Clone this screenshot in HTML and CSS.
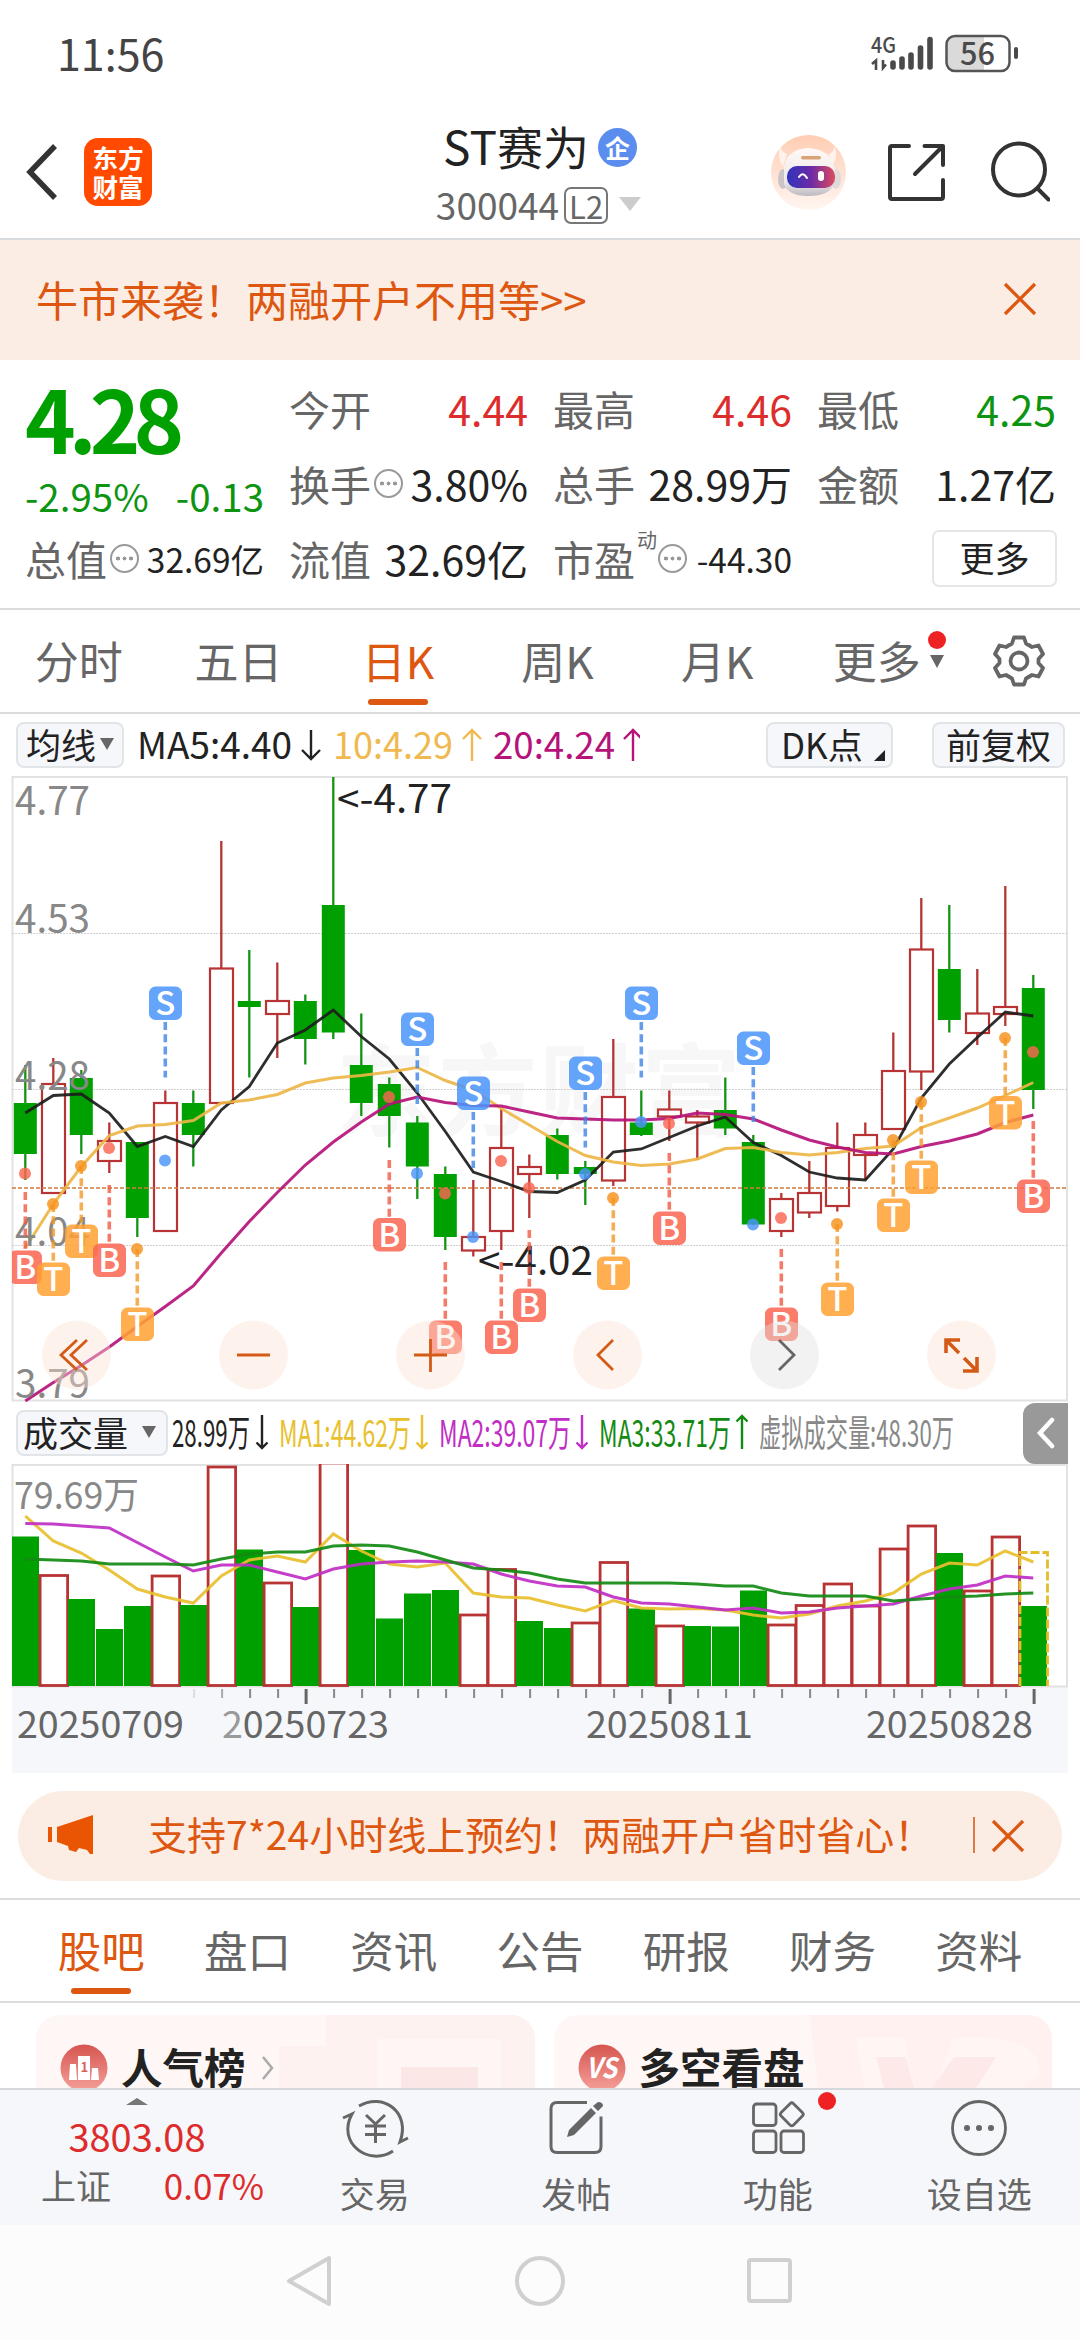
FILE: index.html
```html
<!DOCTYPE html>
<html lang="zh">

<head>
    <meta charset="UTF-8">
    <title>ST赛为 300044</title>
    <link rel="stylesheet" href="styles.css">
</head>

<body>
    <div class="container">
        <div class="status-bar">
            <span class="status-time">11:56</span>
            <svg class="status-icons" width="150" height="44" viewBox="868 32 150 44">
                <text x="871" y="53" font-size="22" font-weight="500" textLength="25" lengthAdjust="spacingAndGlyphs" fill="#4a4a4a">4G</text>
                <path d="M872 64l4-3.500v9.500M883 60v8l3-3.500" fill="none" stroke="#4a4a4a" stroke-width="2.600"/>
                <g stroke="#4a4a4a" stroke-width="5.600" stroke-linecap="round">
                    <path d="M893 63v4M902 59v8M911 55v12M920.500 48v19M930 39.500v27.500"/>
                </g>
                <path d="M953 36h31v35h-31q-6 0-6-6V42q0-6 6-6z" fill="#dadada"/>
                <rect x="946.500" y="36" width="63" height="35" rx="8.500" fill="none" stroke="#555" stroke-width="2.500"/>
                <path d="M1016 49v8" stroke="#4a4a4a" stroke-width="4" stroke-linecap="round"/>
                <text x="960" y="65" font-size="31" font-weight="500" textLength="35" lengthAdjust="spacingAndGlyphs" fill="#4a4a4a">56</text>
            </svg>
        </div>

        <div class="header">
            <div class="header-left">
                <svg width="36" height="60" viewBox="0 0 36 60"><path d="M31 4L6 30l25 26" fill="none" stroke="#333" stroke-width="5.500"/></svg>
                <div class="logo">东方<br>财富</div>
            </div>
            <div class="header-title">
                <div class="stock-name">ST赛为<span class="tag-qi">企</span></div>
                <div class="stock-code">300044<span class="tag-l2">L2</span><i class="tri"></i></div>
            </div>
            <div class="header-right">
                <svg width="280" height="78" viewBox="770 134 280 78">
                    <defs>
                        <linearGradient id="skin" x1="0" y1="0" x2="0" y2="1"><stop offset="0" stop-color="#ffcdb3"/><stop offset="1" stop-color="#fff6f1"/></linearGradient>
                        <linearGradient id="visor"><stop offset="0" stop-color="#2f35bd"/><stop offset=".5" stop-color="#6c2aa6"/><stop offset="1" stop-color="#dd4a5e"/></linearGradient>
                        <linearGradient id="shell" x1="0" y1="0" x2="0" y2="1"><stop offset="0" stop-color="#fffaf7"/><stop offset=".7" stop-color="#eee9e9"/><stop offset="1" stop-color="#bcbac0"/></linearGradient>
                    </defs>
                    <circle cx="808.500" cy="172.500" r="37.500" fill="url(#skin)"/>
                    <path d="M779 151q0-3 2-4 0 5 6 7l-4 12q-5-6-4-15zM836 151q0-3-2-4 0 5-5 7l3 12q5-6 4-15z" fill="#fff2ec"/>
                    <ellipse cx="783" cy="179" rx="5" ry="10" fill="#c9c5c8"/><ellipse cx="836" cy="179" rx="5" ry="10" fill="#ded9da"/>
                    <path d="M784 172q-1-22 24-24 26 2 27 24l-1 12q-4 12-26 12-20 0-24-12z" fill="url(#shell)"/>
                    <rect x="801" y="156" width="20" height="3.500" rx="1.700" fill="#d9a375"/>
                    <rect x="787" y="166" width="48" height="22" rx="10" fill="url(#visor)"/>
                    <path d="M799 177q4-6 8 1" fill="none" stroke="#fff" stroke-width="2" stroke-linecap="round"/>
                    <rect x="818" y="171" width="6" height="10" rx="3" fill="#fff"/>
                    <g fill="none" stroke="#333" stroke-width="4" stroke-linecap="round" stroke-linejoin="round">
                        <path d="M909 146h-17q-2 0-2 2v49q0 2 2 2h49q2 0 2-2v-17M924.500 146H943v19M942 147l-27 27"/>
                        <circle cx="1019" cy="169.500" r="26"/>
                        <path d="M1038 189l10.500 10.500"/>
                    </g>
                </svg>
            </div>
        </div>

        <div class="banner">
            <span>牛市来袭！两融开户不用等&gt;&gt;</span>
            <svg width="34" height="34" viewBox="0 0 34 34"><path d="M2 2l30 30M32 2L2 32" stroke="#dd5711" stroke-width="3.300"/></svg>
        </div>

        <div class="quote">
            <div class="quote-col quote-price">
                <div class="price">4.28</div>
                <div class="change"><span>-2.95%</span><span>-0.13</span></div>
                <div class="quote-item"><span>总值</span><i class="more-dot"></i><b class="small">32.69亿</b></div>
            </div>
            <div class="quote-col">
                <div class="quote-item"><span>今开</span><b class="up">4.44</b></div>
                <div class="quote-item"><span>换手</span><i class="more-dot"></i><b>3.80%</b></div>
                <div class="quote-item"><span>流值</span><b>32.69亿</b></div>
            </div>
            <div class="quote-col">
                <div class="quote-item"><span>最高</span><b class="up">4.46</b></div>
                <div class="quote-item"><span>总手</span><b>28.99万</b></div>
                <div class="quote-item"><span>市盈</span><sup>动</sup><i class="more-dot"></i><b class="small">-44.30</b></div>
            </div>
            <div class="quote-col">
                <div class="quote-item"><span>最低</span><b class="down">4.25</b></div>
                <div class="quote-item"><span>金额</span><b>1.27亿</b></div>
                <div class="quote-item quote-more"><span class="btn-more">更多</span></div>
            </div>
        </div>

        <div class="period-tabs">
            <span>分时</span>
            <span>五日</span>
            <span class="active">日K</span>
            <span>周K</span>
            <span>月K</span>
            <span class="period-more">更多<i class="tri"></i><i class="red-dot"></i></span>
            <svg width="56" height="56" viewBox="-28 -28 56 56" fill="none" stroke="#666" stroke-width="3.800" stroke-linejoin="round">
                <path d="M-5-23.500H5L7-17.500L13-14L19.500-15.500L24-7L19.500-2V2L24 7L19.500 15.500L13 14L7 17.500L5 23.500H-5L-7 17.500L-13 14L-19.500 15.500L-24 7L-19.500 2V-2L-24-7L-19.500-15.500L-13-14L-7-17.500Z"/>
                <circle r="8.500"/>
            </svg>
        </div>

        <div class="legend">
            <span class="btn">均线<i class="tri"></i></span>
            <svg id="maLegend" width="510" height="62" viewBox="130 714 510 62"></svg>
            <span class="btn btn-dk">DK点<i class="corner"></i></span>
            <span class="btn btn-fq">前复权</span>
        </div>
        <svg id="kline" class="chart" width="1058" height="627" viewBox="11 775 1058 627"></svg>
        <div class="legend legend-vol">
            <span class="btn">成交量<i class="tri"></i></span>
            <svg id="volLegend" width="790" height="62" viewBox="168 1402 790 62"></svg>
            <span class="collapse"><svg width="20" height="32" viewBox="0 0 20 32"><path d="M16 3L4 16l12 13" fill="none" stroke="#fff" stroke-width="4.500" stroke-linecap="round"/></svg></span>
        </div>
        <svg id="volume" class="chart" width="1058" height="309" viewBox="11 1464 1058 309"></svg>

        <div class="promo">
            <svg class="horn" width="46" height="40" viewBox="0 0 46 40" fill="#ea5504"><path d="M0 12h4v15H0zM9 12L45 0v39h-3l-3-4-8-2-3 4-7-2-1-4-11-4z"/></svg>
            <span>支持7*24小时线上预约！两融开户省时省心！</span>
            <i class="promo-line"></i>
            <svg width="34" height="34" viewBox="0 0 34 34"><path d="M2 2l30 30M32 2L2 32" stroke="#dd5711" stroke-width="3.300"/></svg>
        </div>

        <div class="info-tabs">
            <span class="active">股吧</span>
            <span>盘口</span>
            <span>资讯</span>
            <span>公告</span>
            <span>研报</span>
            <span>财务</span>
            <span>资料</span>
        </div>

        <div class="cards">
            <div class="card">
                <svg class="card-bg" width="499" height="73" viewBox="0 0 499 73">
                    <path d="M290 0h209v73H243V31h47z" fill="#fdf2f0"/><path d="M341 24h124v49H341z" fill="#fef6f4"/><path d="M365 52h77v21h-77z" fill="#fbe8e6"/>
                </svg>
                <svg width="48" height="48" viewBox="0 0 48 48">
                    <defs><linearGradient id="badge" x1="0" y1="0" x2="0" y2="1"><stop offset="0" stop-color="#d65550"/><stop offset="1" stop-color="#f5a19a"/></linearGradient></defs>
                    <circle cx="24" cy="24" r="23.500" fill="url(#badge)"/>
                    <path d="M10 20h6l1 16H9zM18 12h12v24H18zM32 24h6l1 12h-8z" fill="#fff"/>
                    <text x="20.500" y="28" font-size="13" font-weight="700" fill="#d9605b">1</text>
                </svg>
                <b>人气榜</b>
                <svg width="14" height="24" viewBox="0 0 14 24"><path d="M2 1l9 11-9 11" fill="none" stroke="#aaa" stroke-width="2.500"/></svg>
            </div>
            <div class="card">
                <svg class="card-bg" width="499" height="73" viewBox="0 0 499 73">
                    <path d="M256 0h243v73H264z" fill="#fef1ef"/><path d="M302 22h48l10 51H310zM400 22q90-4 85 38l-18 13h-86z" fill="#fff6f4"/><path d="M322 42h30l8 31h-30zM400 42h42l-20 31h-44z" fill="#fdeae8"/>
                </svg>
                <svg width="48" height="48" viewBox="0 0 48 48">
                    <circle cx="24" cy="24" r="23.500" fill="url(#badge)"/>
                    <text x="8" y="34" font-size="28" font-weight="700" font-style="italic" textLength="31" lengthAdjust="spacingAndGlyphs" fill="#fff">VS</text>
                </svg>
                <b>多空看盘</b>
            </div>
        </div>

        <div class="bottom-nav">
            <div class="nav-index">
                <i class="tri-up"></i>
                <div class="index-value">3803.08</div>
                <div class="index-row"><span>上证</span><b>0.07%</b></div>
            </div>
            <div class="nav-item">
                <svg width="68" height="64" viewBox="341 2096 68 64" fill="none" stroke="#666" stroke-width="3">
                    <path d="M359 2106C383 2092 411 2112 400 2142L408 2138M393 2151C369 2167 336 2143 352 2114L343 2118"/>
                    <path d="M366 2115l9.500 9 9.500-9M365 2126h21M365 2134.500h21M375.500 2124v19"/>
                </svg>
                <span>交易</span>
            </div>
            <div class="nav-item">
                <svg width="68" height="64" viewBox="543 2096 68 64" fill="none" stroke="#666" stroke-width="3">
                    <path d="M588 2102.500h-30q-6 0-6 6v38q0 6 6 6h38q6 0 6-6v-30"/>
                    <path d="M568 2137l2-7 22-22 5 5-22 22zM594 2106l5-4q5 0 5 4l-5 5z" fill="#666" stroke="none"/>
                </svg>
                <span>发帖</span>
            </div>
            <div class="nav-item">
                <svg width="68" height="64" viewBox="744 2096 68 64" fill="none" stroke="#666" stroke-width="2.800">
                    <rect x="753.500" y="2104" width="22.500" height="21.500" rx="3"/><rect x="753.500" y="2131" width="22.500" height="21.500" rx="3"/><rect x="781" y="2131" width="22.500" height="21.500" rx="3"/>
                    <rect x="783" y="2105.500" width="17.500" height="17.500" rx="2.500" transform="rotate(45 791.700 2114.300)"/>
                </svg>
                <i class="red-dot"></i>
                <span>功能</span>
            </div>
            <div class="nav-item">
                <svg width="68" height="64" viewBox="0 0 68 64"><circle cx="34" cy="32" r="26.500" fill="none" stroke="#666" stroke-width="2.800"/><g fill="#666"><circle cx="22" cy="32" r="3"/><circle cx="34" cy="32" r="3"/><circle cx="46" cy="32" r="3"/></g></svg>
                <span>设自选</span>
            </div>
        </div>

        <div class="system-nav">
            <svg width="54" height="54" viewBox="0 0 54 54"><path d="M46 4v46L6 27z"/></svg>
            <svg width="54" height="54" viewBox="0 0 54 54"><circle cx="27" cy="27" r="23"/></svg>
            <svg width="54" height="54" viewBox="0 0 54 54"><rect x="6" y="6" width="41" height="41" rx="2"/></svg>
        </div>
    </div>
    <script src="chart.js"></script>
</body>

</html>
```
FILE: styles.css
```css
html,
body {
    margin: 0;
    background: #fff;
}

body {
    font-family: "Noto Sans CJK SC", "Noto Sans", sans-serif;
    color: #222;
}

i {
    font-style: normal;
}

svg {
    display: block;
    flex: none;
}

.container {
    width: 1080px;
    height: 2340px;
    overflow: hidden;
    display: flex;
    flex-direction: column;
    white-space: nowrap;
}

.container > * {
    box-sizing: border-box;
    flex: none;
}

.status-bar {
    height: 108px;
    padding: 0 62px 0 57px;
    display: flex;
    justify-content: space-between;
    align-items: center;
}

.status-time {
    font-size: 43px;
    color: #444;
    margin-bottom: 5px;
}

/* header */
.header {
    height: 132px;
    display: grid;
    grid-template-columns: 340px 400px 340px;
    border-bottom: 2px solid #d9dcde;
}

.header-left {
    display: flex;
    align-items: center;
    padding: 0 0 2px 24px;
    gap: 24px;
}

.logo {
    width: 68px;
    height: 68px;
    border-radius: 14px;
    background: #ff4a00;
    color: #fff;
    font-size: 25.500px;
    font-weight: 700;
    line-height: 29px;
    text-align: center;
    box-sizing: border-box;
    padding-top: 4px;
}

.header-title {
    text-align: center;
}

.stock-name {
    font-size: 46px;
    line-height: 60px;
    height: 68px;
    padding-top: 6px;
    box-sizing: border-box;
    display: flex;
    justify-content: center;
    align-items: center;
}

.tag-qi {
    width: 39px;
    height: 39px;
    line-height: 38px;
    border-radius: 50%;
    background: #5b8def;
    color: #fff;
    font-size: 25px;
    font-weight: 700;
    margin: 4px 0 0 9px;
}

.stock-code {
    display: flex;
    justify-content: center;
    align-items: center;
    height: 56px;
    color: #666;
    font-size: 37px;
    margin-right: 3px;
}

.tag-l2 {
    border: 2px solid #777;
    border-radius: 7px;
    font-size: 31px;
    line-height: 33px;
    padding: 0 3px;
    margin: 2px 11px 0 5px;
}

.tri {
    border: solid transparent;
    border-width: 14px 11px 0;
    border-top-color: #ccc;
}

.header-right {
    padding-left: 30px;
    padding-top: 26px;
}

.banner {
    height: 120px;
    background: #fcede4;
    color: #dd5711;
    font-size: 42px;
    display: flex;
    align-items: center;
    justify-content: space-between;
    padding: 0 43px 2px 36px;
}

.banner > span {
    margin-bottom: 2px;
}

/* quote */
.quote {
    height: 250px;
    padding: 11px 24px 0 25px;
    display: grid;
    grid-template-columns: repeat(4, 239px);
    column-gap: 25px;
    border-bottom: 2px solid #dcdcdc;
}

.quote-item {
    height: 75px;
    line-height: 75px;
    display: flex;
    align-items: center;
    font-size: 41px;
    color: #666;
}

.quote-item b {
    font-weight: 400;
    color: #222;
    margin-left: auto;
}

.quote-item b.small {
    font-size: 33.500px;
}

.quote-item b.up {
    color: #dd2c2c;
}

.quote-item b.down {
    color: #0d9410;
}

.quote-item sup {
    font-size: 20px;
    line-height: 20px;
    align-self: flex-start;
    margin: 9px -2px 0 2px;
}

.more-dot {
    width: 25px;
    height: 25px;
    border: 2px solid #999;
    border-radius: 50%;
    margin-left: 3px;
    background: radial-gradient(circle at 6px 12.5px, #999 1.8px, transparent 2.2px), radial-gradient(circle at 12.5px 12.5px, #999 1.8px, transparent 2.2px), radial-gradient(circle at 19px 12.5px, #999 1.8px, transparent 2.2px);
}

.price {
    height: 96px;
    line-height: 92px;
    font-size: 86px;
    font-weight: 700;
    letter-spacing: -7px;
    color: #00a000;
}

.change {
    display: flex;
    justify-content: space-between;
    height: 54px;
    line-height: 56px;
    font-size: 38.500px;
    color: #0d9410;
}

.quote-more {
    justify-content: flex-end;
}

.btn-more {
    width: 121px;
    height: 53px;
    line-height: 49px;
    border: 2px solid #e6e6e6;
    border-radius: 7px;
    text-align: center;
    font-size: 35px;
    color: #222;
    margin-right: -1px;
}

/* k line period */
.period-tabs {
    height: 104px;
    border-bottom: 2px solid #dcdcdc;
    display: flex;
    align-items: center;
    font-size: 44px;
    color: #666;
}

.period-tabs > span {
    width: 159.600px;
    line-height: 100px;
    height: 102px;
    text-align: center;
    position: relative;
    left: -1px;
}

.period-tabs > svg {
    margin: 0 0 0 33px;
}

.period-tabs .active,
.info-tabs .active {
    color: #dd5711;
}

.active::after {
    content: "";
    position: absolute;
    left: 50%;
    margin-left: -30px;
    bottom: 7px;
    width: 60px;
    height: 6px;
    border-radius: 3px;
    background: #dd5711;
}

.period-more .tri {
    position: absolute;
    left: 133px;
    top: 45px;
    border-width: 13px 7px 0;
    border-top-color: #666;
}

.red-dot {
    position: absolute;
    width: 18px;
    height: 18px;
    border-radius: 50%;
    background: #ee2222;
}

.period-more .red-dot {
    left: 131px;
    top: 21px;
}

.legend {
    height: 61px;
    display: flex;
    align-items: center;
    padding-left: 16px;
}

.btn {
    height: 46px;
    width: 108px;
    box-sizing: border-box;
    border: 2px solid #e1e5e8;
    border-radius: 8px;
    background: #f6f7fa;
    font-size: 35px;
    line-height: 40px;
    padding: 0 0 2px 8px;
    display: flex;
    align-items: center;
}

.btn .tri {
    border-width: 12px 7.500px 0;
    border-top-color: #666;
    margin-left: 4px;
}

#maLegend {
    margin-left: 6px;
}

.btn-dk {
    width: 127px;
    padding-left: 13px;
    margin-left: 126px;
}

.corner {
    border-left: 11px solid transparent;
    border-bottom: 11px solid #222;
    margin: 24px 0 0 11px;
}

.btn-fq {
    width: 133px;
    margin-left: 39px;
    padding-left: 12px;
}

.chart {
    margin-left: 11px;
}

.legend-vol {
    height: 62px;
}

.legend-vol .btn {
    width: 152px;
    padding-left: 5px;
}

.legend-vol .btn .tri {
    margin-left: 14px;
}

.collapse {
    width: 45px;
    height: 61px;
    margin-left: 65px;
    border-radius: 12px 0 0 12px;
    background: #999;
    display: flex;
    align-items: center;
    justify-content: center;
}

/* promo */
.promo {
    height: 90px;
    margin: 18px 18px 17px;
    padding: 0 37px 0 30px;
    border-radius: 45px;
    background: #fcede4;
    color: #dd5711;
    font-size: 39px;
    display: flex;
    align-items: center;
}

.promo > span {
    margin-left: 54px;
    line-height: 82px;
    height: 88px;
}

.horn {
    margin-bottom: 2px;
}

.promo-line {
    width: 2px;
    height: 36px;
    background: #dd7a45;
    margin: 0 16px 3px auto;
}

.info-tabs {
    height: 105px;
    border-top: 2px solid #dcdcdc;
    border-bottom: 2px solid #dcdcdc;
    padding: 0 28px;
    display: grid;
    grid-template-columns: repeat(7, 1fr);
    text-align: center;
    font-size: 43.500px;
    line-height: 100px;
    color: #666;
}

.info-tabs > span {
    position: relative;
}

.cards {
    height: 85px;
    padding: 12px 28px 0 36px;
    display: flex;
    gap: 19px;
    overflow: hidden;
}

.card {
    width: 499px;
    height: 150px;
    box-sizing: border-box;
    border-radius: 24px;
    overflow: hidden;
    background: #fef7f5;
    position: relative;
    display: flex;
    align-items: flex-start;
    padding: 29px 0 0 24px;
}

.card > * {
    position: relative;
}

.card .card-bg {
    position: absolute;
    left: 0;
    top: 0;
}

.card b {
    font-size: 41.500px;
    line-height: 48px;
    margin: -2px 15px 0 13px;
}

.card b + svg {
    margin-top: 12px;
}

/* bottom */
.bottom-nav {
    height: 137px;
    border-top: 2px solid #d5d8dc;
    background: #f6f7fa;
    display: grid;
    grid-template-columns: 274px repeat(4, 201.500px);
    color: #666;
}

.nav-index {
    display: flex;
    flex-direction: column;
    align-items: center;
    font-size: 38px;
}

.tri-up {
    border: solid transparent;
    border-width: 0 11px 7px;
    border-bottom-color: #777;
    margin-top: 8px;
}

.index-value {
    color: #dd2c2c;
    line-height: 46px;
    margin-top: 8px;
}

.index-row {
    display: flex;
    align-self: stretch;
    justify-content: space-between;
    line-height: 52px;
    padding: 0 10px 0 41px;
    font-size: 35px;
}

.index-row b {
    font-weight: 400;
    color: #dd2c2c;
}

.nav-item {
    display: flex;
    flex-direction: column;
    align-items: center;
    position: relative;
    padding-top: 6px;
    font-size: 35px;
    line-height: 65px;
}

.nav-item .red-dot {
    left: 141px;
    top: 2px;
}

.system-nav {
    height: 115px;
    background: #fcfcfc;
    display: flex;
    justify-content: center;
    gap: 176px;
    padding-top: 29px;
}

.system-nav svg {
    fill: none;
    stroke: #d0d0d0;
    stroke-width: 4;
    stroke-linejoin: round;
}
```
FILE: chart.js
```js
(function() {
    var GREEN = '#00a000', RED = '#b83333';
    var x0 = 25.3, step = 28;

    function px(i) {
        return x0 + i * step;
    }

    function label(x, y, w, size, color, text) {
        return '<text x="' + x + '" y="' + y + '" font-size="' + size + '" textLength="' + w +
            '" lengthAdjust="spacingAndGlyphs" fill="' + color + '">' + text + '</text>';
    }

    function line(x1, y1, x2, y2, color, w, extra) {
        return '<path d="M' + x1 + ' ' + y1 + 'L' + x2 + ' ' + y2 + '" stroke="' + color + '" stroke-width="' + w + '" ' + (extra || '') + '/>';
    }

    function poly(ys, color, w) {
        var pts = ys.map(function(y, i) { return px(i) + ',' + y; }).join(' ');
        return '<polyline points="' + pts + '" fill="none" stroke="' + color + '" stroke-width="' + w + '" stroke-opacity=".92"/>';
    }

    function arrow(x, top, bottom, half, color, up) {
        var tip = up ? top : bottom, d = up ? half : -half;
        return '<path d="M' + x + ' ' + top + 'V' + bottom + 'M' + (x - half) + ' ' + (tip + d) + 'L' + x + ' ' + tip + 'L' + (x + half) + ' ' + (tip + d) +
            '" fill="none" stroke="' + color + '" stroke-width="2.4"/>';
    }

    // 涨跌, 最高, 实体上沿, 实体下沿, 最低
    var candles = [
        ['g', 1065, 1103, 1154, 1180], ['r', 1058, 1084, 1193, 1193], ['g', 1070, 1078, 1135, 1154],
        ['r', 1122.5, 1141, 1161, 1173], ['g', 1142, 1142, 1218, 1237], ['r', 1090.5, 1103, 1231, 1231],
        ['g', 1090.5, 1103, 1135, 1166.5], ['r', 841, 968.5, 1103, 1103], ['g', 950, 1001, 1007, 1077.5],
        ['r', 962.5, 1001, 1014, 1058], ['g', 994.5, 1001, 1039, 1064.5], ['g', 777, 905, 1032.5, 1039],
        ['g', 1013.5, 1065, 1103, 1116], ['g', 1077.5, 1084, 1116, 1147.5], ['g', 1116, 1122.5, 1166.5, 1199],
        ['g', 1166.5, 1174, 1237, 1250], ['r', 1180, 1237, 1250.5, 1256.5], ['r', 1109, 1148, 1231, 1250],
        ['r', 1154.5, 1167, 1174, 1218], ['g', 1128.5, 1135, 1174, 1179.5], ['g', 1161, 1167, 1174, 1205],
        ['r', 1039, 1097, 1180.5, 1186], ['g', 1090.5, 1122.5, 1135, 1136], ['r', 1090.5, 1109.5, 1116.5, 1141],
        ['r', 1110, 1116.5, 1122.5, 1160], ['g', 1077.5, 1110, 1128.5, 1135], ['g', 1135, 1142, 1224.5, 1225],
        ['r', 1193, 1199, 1231, 1237], ['r', 1161, 1193, 1212.5, 1218], ['r', 1122.5, 1148, 1206, 1211.5],
        ['r', 1122.5, 1135, 1155, 1179.5], ['r', 1032.5, 1071, 1129, 1129], ['r', 898, 949.5, 1071.5, 1090],
        ['g', 905, 969, 1020, 1032.5], ['r', 969, 1013.5, 1033, 1045], ['r', 886, 1007, 1014, 1026],
        ['g', 975, 988, 1090, 1109]
    ];
    var ma5 = [1113, 1095.5, 1094, 1113, 1146.5, 1136.5, 1146.5, 1110, 1086.5, 1043, 1030, 1010, 1036.5, 1059, 1093, 1131.5, 1172, 1181.5, 1191.5, 1192.5, 1180, 1152, 1149, 1137.5, 1126, 1117, 1142.5, 1155.5, 1172, 1178, 1180, 1149, 1098, 1064, 1037.5, 1012, 1016];
    var ma10 = [1248, 1204, 1166.5, 1135.5, 1126, 1124.5, 1120.5, 1103, 1100, 1094.5, 1083, 1078, 1075.5, 1072, 1067.5, 1080.5, 1090, 1108.5, 1125, 1141.5, 1155.5, 1162, 1165.5, 1164, 1159, 1148.5, 1147.5, 1152.5, 1155, 1152.5, 1148.5, 1146, 1127.5, 1118, 1108, 1095.5, 1082.5];
    var ma20 = [1401, 1382.5, 1365.5, 1347, 1326.5, 1306.5, 1286, 1253, 1221.5, 1192.5, 1165, 1142, 1122, 1104, 1097, 1102.5, 1105.5, 1106, 1112, 1118, 1119, 1120, 1120, 1118.5, 1113, 1114.5, 1119, 1130, 1140, 1147, 1152.5, 1154, 1146.5, 1141, 1134, 1122.5, 1115];

    // 类型, 序号, 圆点y, 徽标中心y, 虚线起, 虚线止
    var marks = [
        ['B', 0, 1173.5, 1267, 1192, 1250], ['T', 1, 1204, 1279, 1204, 1262], ['T', 2, 1166, 1241, 1166, 1224],
        ['B', 3, 1148, 1260, 1185, 1243], ['T', 4, 1249, 1324, 1249, 1307], ['S', 5, 1160.5, 1003, 1022, 1077.5],
        ['B', 13, 1097, 1234.5, 1160, 1218], ['S', 14, 1173.5, 1029, 1048, 1104], ['B', 15, 1193.5, 1337, 1262, 1320],
        ['S', 16, 1237, 1093, 1112, 1168], ['B', 17, 1161, 1337, 1262, 1320], ['B', 18, 1188, 1305, 1230, 1288],
        ['S', 20, 1174, 1073, 1092, 1147.5], ['T', 21, 1198, 1273, 1198, 1256], ['S', 22, 1122, 1003, 1022, 1077.5],
        ['B', 23, 1123.5, 1228, 1153, 1211], ['S', 26, 1224.5, 1048, 1067, 1122], ['B', 27, 1218, 1324, 1249, 1307],
        ['T', 29, 1224, 1299, 1224, 1282], ['T', 31, 1140, 1215, 1140, 1198], ['T', 32, 1102, 1177, 1102, 1160],
        ['T', 35, 1038, 1112.5, 1038, 1095], ['B', 36, 1052, 1196, 1121, 1179]
    ];
    var markColor = {
        S: ['#4a95fa', '#3e85e5'],
        B: ['#fa6752', '#f05a45'],
        T: ['#ffa133', '#f09a2c']
    };

    function drawKline() {
        var s = '<text x="336" y="1128" font-size="100" font-weight="700" fill="#f7f7f7" textLength="405">东方财富</text>';
        s += '<path d="M12.500 777H1067V1400.500H12.500z" fill="none" stroke="#e2e2e2" stroke-width="2"/>';
        [933.5, 1089.5, 1245.5].forEach(function(y) {
            s += line(12, y, 1067, y, '#d0d0d0', 1, 'stroke-dasharray="2 1"');
        });
        candles.forEach(function(c, i) {
            var x = px(i), color = c[0] == 'g' ? '#129412' : RED;
            if (c[0] == 'g') {
                s += line(x, c[1], x, c[4], color, 2.3);
                s += '<rect x="' + (x - 11.5) + '" y="' + c[2] + '" width="23" height="' + (c[3] - c[2]) + '" fill="' + GREEN + '"/>';
            } else {
                s += line(x, c[1], x, c[2], color, 2.3) + line(x, c[3], x, c[4], color, 2.3);
                s += '<rect x="' + (x - 11.3) + '" y="' + c[2] + '" width="23" height="' + (c[3] - c[2]) + '" fill="#fff" stroke="' + color + '" stroke-width="2.2"/>';
            }
        });
        s += line(12, 1188, 1067, 1188, '#cf7b3c', 1.3, 'stroke-dasharray="4 2"');
        s += poly(ma5, '#1c1c1c', 2.8) + poly(ma10, '#edb545', 3) + poly(ma20, '#b5127a', 3);
        [[815, '4.77'], [933, '4.53'], [1090, '4.28'], [1246, '4.04'], [1398, '3.79']].forEach(function(a) {
            s += label(15, a[0], 75, 39, '#888', a[1]);
        });
        s += label(337, 813, 115, 39, '#222', '&lt;-4.77') + label(478, 1275, 115, 39, '#222', '&lt;-4.02');
        s += '<g clip-path="url(#area)">';
        marks.forEach(function(m) {
            var x = px(m[1]), c = markColor[m[0]];
            s += line(x, m[4], x, m[5], c[1], 3.6, 'stroke-dasharray="8 4.2" stroke-opacity=".8"');
            s += '<circle cx="' + (x - .3) + '" cy="' + m[2] + '" r="6" fill="' + (m[0] == 'T' ? '#f7921c' : c[0]) + '" fill-opacity=".82"/>';
            s += '<rect x="' + (x - 16.3) + '" y="' + (m[3] - 16.5) + '" width="33" height="33.500" rx="6.500" fill="' + c[0] + '" fill-opacity=".86"/>';
            s += '<text x="' + x + '" y="' + (m[3] + 12) + '" font-size="33" font-weight="500" text-anchor="middle" fill="#fff">' + m[0] + '</text>';
        });
        s += '</g><clipPath id="area"><path d="M12 776h1056v626H12z"/></clipPath>';

        // 悬浮按钮
        var icons = [
            'M77 1340L61 1355l16 15M87 1340L71 1355l16 15',
            'M237 1355h33',
            'M414 1355h33M430.500 1339v33',
            'M613 1340l-15 15 15 15',
            'M779 1340l15 15-15 15',
            'M946 1353v-13h14M947 1341l12 12M963 1371h14v-14M976 1370l-12-12'
        ];
        icons.forEach(function(d, i) {
            var gray = i == 4;
            s += '<circle cx="' + (76.5 + i * 177) + '" cy="1355" r="34.500" fill="' + (gray ? '#e0e0e0' : '#fde0d2') + '" fill-opacity=".42"/>';
            s += '<path d="' + d + '" fill="none" stroke="' + (gray ? '#666' : '#d35a17') + '" stroke-width="' + (i == 5 ? 3.6 : 2.8) + '"/>';
        });
        document.getElementById('kline').innerHTML = s;
    }

    var vols = [
        ['g', 1536.5], ['r', 1575.5], ['g', 1599], ['g', 1629], ['g', 1606], ['r', 1576], ['g', 1605], ['r', 1467], ['g', 1549.5],
        ['r', 1583], ['g', 1607], ['r', 1463], ['g', 1550], ['g', 1618.5], ['g', 1593.5], ['g', 1590], ['r', 1615], ['r', 1569.5],
        ['g', 1621], ['g', 1628], ['r', 1623], ['r', 1562.5], ['g', 1608.5], ['r', 1626], ['g', 1626], ['g', 1626.5], ['g', 1590.5],
        ['r', 1625], ['r', 1605.5], ['r', 1584], ['r', 1606], ['r', 1549], ['r', 1526], ['g', 1553], ['r', 1591], ['r', 1537], ['g', 1606]
    ];
    var vma1 = [1516, 1541, 1553, 1570, 1589, 1597, 1603, 1576, 1560, 1556, 1562, 1534, 1551, 1564, 1567, 1563, 1593, 1597, 1598, 1605, 1611, 1600.5, 1608, 1609, 1608.5, 1610, 1615, 1618, 1614, 1606, 1601, 1593, 1574, 1563, 1565, 1551, 1562];
    var vma2 = [1523.5, 1524, 1526, 1528, 1542.5, 1557, 1571, 1565, 1565, 1572, 1579, 1569, 1564, 1562, 1561, 1562, 1564, 1574, 1581, 1586, 1587, 1597, 1603, 1604, 1607, 1610, 1608, 1613, 1612, 1608, 1606, 1604, 1596, 1589, 1585, 1576, 1578];
    var vma3 = [1559, 1560, 1561, 1564, 1564, 1564, 1565, 1559, 1554, 1552, 1552, 1546, 1545, 1546, 1552, 1560, 1568, 1570, 1573, 1579, 1583, 1583, 1583, 1583, 1584, 1586, 1586, 1593, 1596, 1596, 1596, 1601, 1599, 1597, 1596, 1594, 1593];

    function drawVolume() {
        var s = '<path d="M12 1687h1056v86H12z" fill="#f6f7fa"/>';
        s += '<path d="M12.500 1465H1067V1686.500H12.500z" fill="none" stroke="#e2e2e2" stroke-width="2"/>';
        s += label(14, 1509, 125, 37, '#888', '79.69万');
        vols.forEach(function(v, i) {
            var x = px(i);
            if (v[0] == 'g') {
                s += '<rect x="' + (x - 13.3) + '" y="' + v[1] + '" width="27" height="' + (1686 - v[1]) + '" fill="' + GREEN + '"/>';
            } else {
                s += '<rect x="' + (x - 13.2) + '" y="' + v[1] + '" width="27.500" height="' + (1685.5 - v[1]) + '" fill="#fff" stroke="' + RED + '" stroke-width="2.800"/>';
            }
        });
        s += '<path d="M1020 1686V1552.500h27.500V1686" fill="none" stroke="#e3bd2b" stroke-width="2.800" stroke-dasharray="9 3"/>';
        s += poly(vma1, '#e8bf2c', 3) + poly(vma2, '#c02ec5', 3) + poly(vma3, '#128a12', 3);
        for (var i = 6; i < 37; i++) {
            var big = i == 10 || i == 23 || i == 36;
            s += line(px(i) + .8, 1689, px(i) + .8, big ? 1704 : 1698, i == 6 ? '#ddd' : i == 7 ? '#aaa' : big ? '#666' : '#888', big ? 3 : 2);
        }
        [[17, '20250709'], [222, '<tspan fill="#999">2</tspan>0250723'], [586, '20250811'], [866, '20250828']].forEach(function(a) {
            s += label(a[0], 1738, 167, 37, '#666', a[1]);
        });
        document.getElementById('volume').innerHTML = s;
    }

    document.getElementById('maLegend').innerHTML =
        label(137, 759, 155, 37, '#222', 'MA5:4.40') + arrow(311, 730, 759, 9, '#222', false) +
        label(333, 759, 120, 37, '#f0b94f', '10:4.29') + arrow(472, 730, 761, 9, '#f0b94f', true) +
        label(493, 759, 122, 37, '#b5127a', '20:4.24') + arrow(633, 730, 761, 9, '#b5127a', true);

    document.getElementById('volLegend').innerHTML =
        label(172, 1447, 78, 37, '#222', '28.99万') + arrow(262, 1415, 1448, 5.5, '#222', false) +
        label(279, 1447, 132, 37, '#e8bf2c', 'MA1:44.62万') + arrow(422, 1415, 1448, 5.5, '#e8bf2c', false) +
        label(439, 1447, 132, 37, '#c02ec5', 'MA2:39.07万') + arrow(582, 1415, 1448, 5.5, '#c02ec5', false) +
        label(599, 1447, 132, 37, '#128a12', 'MA3:33.71万') + arrow(742, 1416, 1449, 5.5, '#128a12', true) +
        label(759, 1447, 195, 37, '#888', '虚拟成交量:48.30万');

    drawKline();
    drawVolume();
})();
```
